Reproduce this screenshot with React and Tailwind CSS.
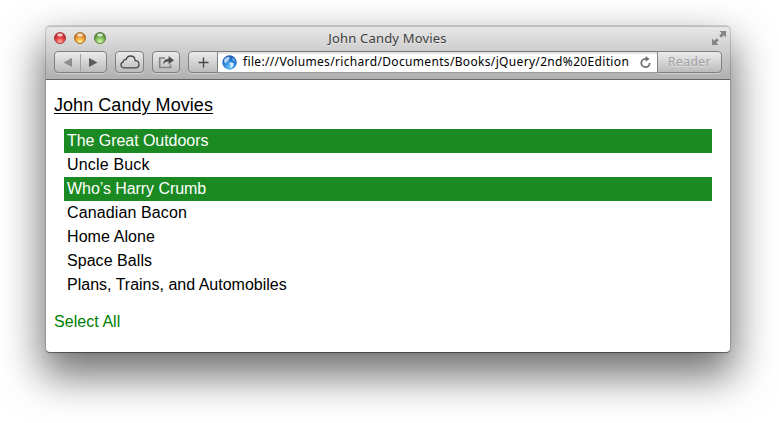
import React from "react";

const movies = [
  { title: "The Great Outdoors", selected: true, spacing: "tracking-[-0.05px]" },
  { title: "Uncle Buck", spacing: "tracking-[0.18px]" },
  { title: "Who’s Harry Crumb", selected: true, spacing: "tracking-[-0.06px]" },
  { title: "Canadian Bacon", spacing: "tracking-[0.12px]" },
  { title: "Home Alone", spacing: "tracking-[0.08px]" },
  { title: "Space Balls", spacing: "tracking-[0.05px]" },
  { title: "Plans, Trains, and Automobiles", spacing: "tracking-[0px]" },
];

const button =
  "flex h-[22px] items-center justify-center rounded-[4px] border border-[#808080] bg-linear-to-b from-[#ececec] to-[#bcbcbc] shadow-[0_1px_0_rgba(255,255,255,0.35)]";

function Light({ id, edge, dark, mid, glow }) {
  return (
    <svg className="size-3" viewBox="0 0 12 12">
      <defs>
        <radialGradient id={id} cx="0.5" cy="0.85" r="0.8">
          <stop offset="0" stopColor={glow} />
          <stop offset="0.5" stopColor={mid} />
          <stop offset="1" stopColor={dark} />
        </radialGradient>
      </defs>
      <circle cx="6" cy="6" r="5.5" fill={`url(#${id})`} stroke={edge} strokeWidth="0.9" />
      <ellipse cx="6" cy="2.9" rx="2.9" ry="1.6" fill="#fff" opacity="0.75" />
    </svg>
  );
}

function Globe() {
  return (
    <svg className="ml-[4px] size-[15px] shrink-0" viewBox="0 0 15 15">
      <defs>
        <radialGradient id="globe" cx="0.5" cy="0.8" r="0.8">
          <stop offset="0" stopColor="#6cc8fa" />
          <stop offset="0.5" stopColor="#2b80da" />
          <stop offset="1" stopColor="#1a55ad" />
        </radialGradient>
      </defs>
      <circle cx="7.5" cy="7.5" r="7.2" fill="url(#globe)" />
      <path d="M2 5 3.6 2.8 6.8 1.8 8 3.2 6.6 4.6 6.4 6 4.6 7 3.6 8.6 2.4 7.4Z" fill="#d5effc" opacity=".8" />
      <path d="M10 2.6 12.3 4 13.4 6.4 12 6.6 10.8 5.2Z" fill="#a9dcfa" opacity=".6" />
      <path d="M7 7.4 9.8 7.4 12 8.6 11.4 10.8 9.4 13 8.4 12.2 8.4 10Z" fill="#e2f5fd" opacity=".9" />
    </svg>
  );
}

function Toolbar() {
  return (
    <header className="h-[54px] rounded-t-[4px] border-b border-[#666] bg-linear-to-b from-[#e8e8e8] to-[#b0b0b0] font-['Noto_Sans','Open_Sans',sans-serif] shadow-[inset_0_1px_0_#bcbcbc]">
      <div className="flex h-[25px] items-center justify-between pr-1 pb-px pl-2">
        <div className="flex w-[57px] gap-2">
          <Light id="red" edge="#a33232" dark="#a71d20" mid="#e8403f" glow="#ffb3a5" />
          <Light id="amber" edge="#a86a25" dark="#b5651b" mid="#f1a33a" glow="#fff3a0" />
          <Light id="green" edge="#4f7a36" dark="#44762c" mid="#83bd5b" glow="#dcffb0" />
        </div>
        <h1 className="text-[13px] leading-[18px] tracking-[0.18px] text-[#3c3c3c] [text-shadow:0_1px_0_rgba(255,255,255,0.5)]">
          John Candy Movies
        </h1>
        <div className="flex w-[62px] justify-end">
          <svg className="size-[14px]" viewBox="0 0 14 14" fill="#858585">
            <path d="M7.5 0H14V6.5L11.8 4.3 9.2 6.8 7.2 4.8 9.7 2.2Z" />
            <path d="M6.5 14H0V7.5L2.2 9.7 4.8 7.2 6.8 9.2 4.3 11.8Z" />
          </svg>
        </div>
      </div>
      <div className="flex px-2">
        <div className={`${button} w-[53px]`}>
          <svg className="h-5 w-[51px] shrink-0" viewBox="0 0 51 20">
            <path d="M17 6V15L8.5 10.5Z" fill="#8d8d8d" />
            <path d="M25.5 2V19" stroke="#a0a0a0" />
            <path d="M34 6V15L42.5 10.5Z" fill="#5c5c5c" />
          </svg>
        </div>
        <div className={`${button} ml-2 w-[29px]`}>
          <svg className="h-[14px] w-[20px] shrink-0" viewBox="0 0 20 14" fill="none" stroke="#484848" strokeWidth="1.3">
            <path d="M4.5 12.9C2.4 12.9 1 11.5 1 9.7 1 8.2 2 7.1 3.4 6.8 3.2 5.2 4.7 4.1 6.1 4.6 6.8 2.4 8.4 1 10.5 1 13.2 1 15 2.9 15.1 5.6 17.4 5.7 19 7.1 19 9.2 19 11.4 17.6 12.9 15.4 12.9Z" />
          </svg>
        </div>
        <div className={`${button} ml-2 w-[28px]`}>
          <svg className="ml-px h-[14px] w-[17px] shrink-0" viewBox="0 0 17 14">
            <path d="M7 3H1.7V12.5H12.5V9.5" fill="none" stroke="#858585" strokeWidth="1.7" />
            <path d="M5 9.6C5.2 5.8 7.2 3.9 10.6 3.8V1L16 5.2 10.6 9.2V6.5C8 6.4 6.4 7.5 5 9.6Z" fill="#505050" />
          </svg>
        </div>
        <div className={`${button} ml-2 w-[30px] rounded-r-none`}>
          <svg className="size-[11px]" viewBox="0 0 11 11" stroke="#484848" strokeWidth="1.4">
            <path d="M.5 5.5H10.5M5.5 .5V10.5" />
          </svg>
        </div>
        <div className="flex h-[22px] w-[439px] items-center border-y border-t-[#777] border-b-[#999] bg-white shadow-[inset_0_2px_1px_#e5e5e5]">
          <Globe />
          <span className="ml-[6px] text-[12px] leading-5 tracking-[0.335px] whitespace-nowrap text-black">
            file:///Volumes/richard/Documents/Books/jQuery/2nd%20Edition
          </span>
          <svg className="mr-[6px] ml-auto h-[13px] w-[11px] shrink-0" viewBox="0 0 11 13">
            <path d="M6.5 2.8H5.4A4.2 4.2 0 1 0 9.7 7.1" fill="none" stroke="#707070" strokeWidth="1.8" />
            <path d="M5.6 0V5.8L9.6 2.9Z" fill="#707070" />
          </svg>
        </div>
        <div className={`${button} w-[65px] rounded-l-none text-[12px] leading-5 tracking-[0.5px] text-[#a0a0a0] [text-shadow:0_1px_0_rgba(255,255,255,0.5)]`}>
          Reader
        </div>
      </div>
    </header>
  );
}

export default function App() {
  return (
    <div className="h-[423px] w-[779px] overflow-hidden bg-white pt-[26px] pl-[46px]">
      <div className="h-[326px] w-[684px] rounded-[4px] bg-white shadow-[0_0_0_1px_rgba(0,0,0,0.12),0_1px_1px_rgba(0,0,0,0.4),0_20px_42px_4px_rgba(0,0,0,0.56)]">
        <Toolbar />
        <main className="px-2 pt-[13px] font-['Liberation_Sans',Arial,sans-serif] text-[16px] leading-6 text-black">
          <h2 className="text-[18px] leading-6 tracking-[0.05px] underline decoration-1 underline-offset-2">
            <span>John Candy Movies</span>
          </h2>
          <ul className="mt-3 mr-[10px] ml-[10px]">
            {movies.map((movie) => (
              <li
                key={movie.title}
                className={`h-6 pl-[3px] ${movie.spacing} ${movie.selected ? "bg-[#1b8a22] text-white" : ""}`}
              >
                {movie.title}
              </li>
            ))}
          </ul>
          <p className="mt-[13px] tracking-[0.05px] text-[#008000]">
            <span>Select All</span>
          </p>
        </main>
      </div>
    </div>
  );
}
